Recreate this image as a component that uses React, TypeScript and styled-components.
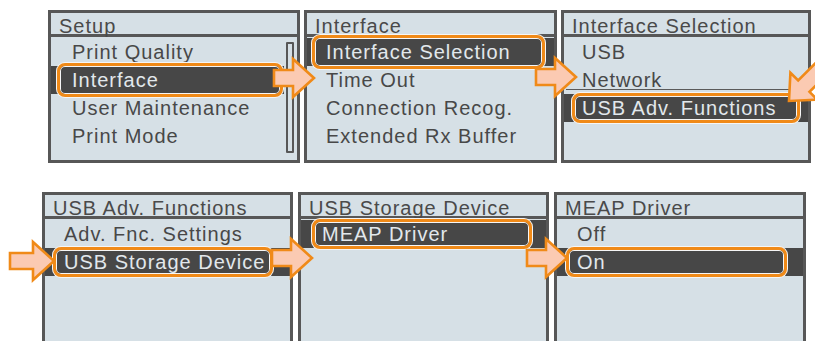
import styled, { createGlobalStyle } from "styled-components";

const GlobalStyle = createGlobalStyle`
  html, body {
    margin: 0;
    padding: 0;
    background: #ffffff;
    overflow: hidden;
  }
  body {
    font-family: "Liberation Sans", Arial, sans-serif;
  }
`;

const Page = styled.div`
  position: relative;
  width: 815px;
  height: 341px;
  overflow: hidden;
  box-sizing: border-box;
  padding-top: 10px;
  display: flex;
  flex-direction: column;
  gap: 29px;
`;

const PanelRow = styled.div<{ $left: number; $gap: number }>`
  display: flex;
  gap: ${(p) => p.$gap}px;
  padding-left: ${(p) => p.$left}px;
`;

const Panel = styled.section<{ $w: number; $h: number }>`
  box-sizing: border-box;
  flex: none;
  width: ${(p) => p.$w}px;
  height: ${(p) => p.$h}px;
  border: 3px solid #575757;
  background: #d6e0e6;
  display: flex;
  flex-direction: column;
`;

const Title = styled.header`
  flex: none;
  height: 21px;
  padding-left: 8px;
  border-bottom: 3px solid #575757;
  font-size: 20px;
  line-height: 27px;
  letter-spacing: 1px;
  color: #4a4a4a;
  white-space: nowrap;
`;

const Body = styled.div`
  flex: 1;
  display: flex;
  min-height: 0;
`;

const List = styled.div`
  flex: 1;
  display: flex;
  flex-direction: column;
  padding-top: 1px;
`;

const Row = styled.div<{ $indent: number; $active?: boolean; $rule?: boolean }>`
  position: relative;
  flex: none;
  height: 28px;
  display: flex;
  align-items: center;
  padding-left: ${(p) => (p.$active ? 0 : p.$indent)}px;
  background: ${(p) => (p.$active ? "#474747" : "transparent")};
  font-size: 20px;
  letter-spacing: 1px;
  color: #484848;
  white-space: nowrap;

  &::after {
    content: "";
    display: ${(p) => (p.$rule ? "block" : "none")};
    position: absolute;
    left: 2px;
    right: 11px;
    bottom: 4px;
    height: 1px;
    background: #5a5a5a;
  }
`;

const Pill = styled.div<{ $l: number; $r: number; $grow: number; $pad: number }>`
  position: relative;
  flex: 1;
  align-self: stretch;
  display: flex;
  align-items: center;
  margin: ${(p) => -p.$grow}px ${(p) => p.$r}px ${(p) => -p.$grow}px
    ${(p) => p.$l}px;
  padding-left: ${(p) => p.$pad}px;
  border: 3px solid #f08a18;
  border-radius: 8px;
  box-shadow: 0 0 0 1px #f6f6f6, inset 0 0 0 1px #f6f6f6;
  background: #474747;
  color: #e2e8ec;
`;

const ScrollTrack = styled.div`
  flex: none;
  box-sizing: border-box;
  width: 8px;
  margin: 5px 3px 7px 2px;
  border: 2.5px solid #575757;
  border-radius: 1px;
`;

const Overlay = styled.svg`
  position: absolute;
  left: 0;
  top: 0;
  pointer-events: none;
`;

type Sel = { index: number; l: number; r: number; grow: number };

type Menu = {
  title: string;
  width: number;
  indent: number;
  items: string[];
  sel: Sel;
  rule?: number;
  scroll?: boolean;
};

const topMenus: Menu[] = [
  {
    title: "Setup",
    width: 252,
    indent: 21,
    items: ["Print Quality", "Interface", "User Maintenance", "Print Mode"],
    sel: { index: 1, l: 6, r: 1, grow: 3 },
    scroll: true,
  },
  {
    title: "Interface",
    width: 253,
    indent: 19,
    items: [
      "Interface Selection",
      "Time Out",
      "Connection Recog.",
      "Extended Rx Buffer",
    ],
    sel: { index: 0, l: 5, r: 9, grow: 3 },
  },
  {
    title: "Interface Selection",
    width: 250,
    indent: 18,
    items: ["USB", "Network", "USB Adv. Functions"],
    sel: { index: 2, l: 8, r: 8, grow: 1 },
    rule: 1,
  },
];

const bottomMenus: Menu[] = [
  {
    title: "USB Adv. Functions",
    width: 251,
    indent: 19,
    items: ["Adv. Fnc. Settings", "USB Storage Device"],
    sel: { index: 1, l: 8, r: 17, grow: 1 },
  },
  {
    title: "USB Storage Device",
    width: 251,
    indent: 21,
    items: ["MEAP Driver"],
    sel: { index: 0, l: 11, r: 14, grow: 1 },
  },
  {
    title: "MEAP Driver",
    width: 252,
    indent: 20,
    items: ["Off", "On"],
    sel: { index: 1, l: 9, r: 16, grow: 1 },
  },
];

const MenuPanel = ({ menu, height }: { menu: Menu; height: number }) => (
  <Panel $w={menu.width} $h={height}>
    <Title>{menu.title}</Title>
    <Body>
      <List>
        {menu.items.map((item, i) =>
          i === menu.sel.index ? (
            <Row key={item} $indent={menu.indent} $active>
              <Pill
                $l={menu.sel.l}
                $r={menu.sel.r}
                $grow={menu.sel.grow}
                $pad={menu.indent - menu.sel.l - 3}
              >
                {item}
              </Pill>
            </Row>
          ) : (
            <Row key={item} $indent={menu.indent} $rule={menu.rule === i}>
              {item}
            </Row>
          )
        )}
      </List>
      {menu.scroll && <ScrollTrack />}
    </Body>
  </Panel>
);

// block arrow pointing right, tip at (0,0); len = tip to tail
const arrowPoints = (len: number) =>
  `${-len},-8 -21,-8 -21,-19 0,0 -21,19 -21,8 ${-len},8`;

const Arrow = ({
  x,
  y,
  angle = 0,
  len = 40,
}: {
  x: number;
  y: number;
  angle?: number;
  len?: number;
}) => (
  <polygon
    points={arrowPoints(len)}
    transform={`translate(${x} ${y}) rotate(${angle})`}
    fill="#fbcab2"
    stroke="#f08a18"
    strokeWidth={2.6}
    strokeLinejoin="miter"
  />
);

const App = () => {
  return (
    <>
      <GlobalStyle />
      <Page>
        <PanelRow $left={48} $gap={4}>
          {topMenus.map((m) => (
            <MenuPanel key={m.title} menu={m} height={153} />
          ))}
        </PanelRow>
        <PanelRow $left={42} $gap={5}>
          {bottomMenus.map((m) => (
            <MenuPanel key={m.title} menu={m} height={160} />
          ))}
        </PanelRow>
        <Overlay width={815} height={341} viewBox="0 0 815 341">
          <Arrow x={314} y={78} />
          <Arrow x={576} y={77} />
          <Arrow x={789} y={101} angle={135} len={48} />
          <Arrow x={54} y={261} len={44} />
          <Arrow x={312} y={258} />
          <Arrow x={567} y={258} />
        </Overlay>
      </Page>
    </>
  );
};

export default App;
